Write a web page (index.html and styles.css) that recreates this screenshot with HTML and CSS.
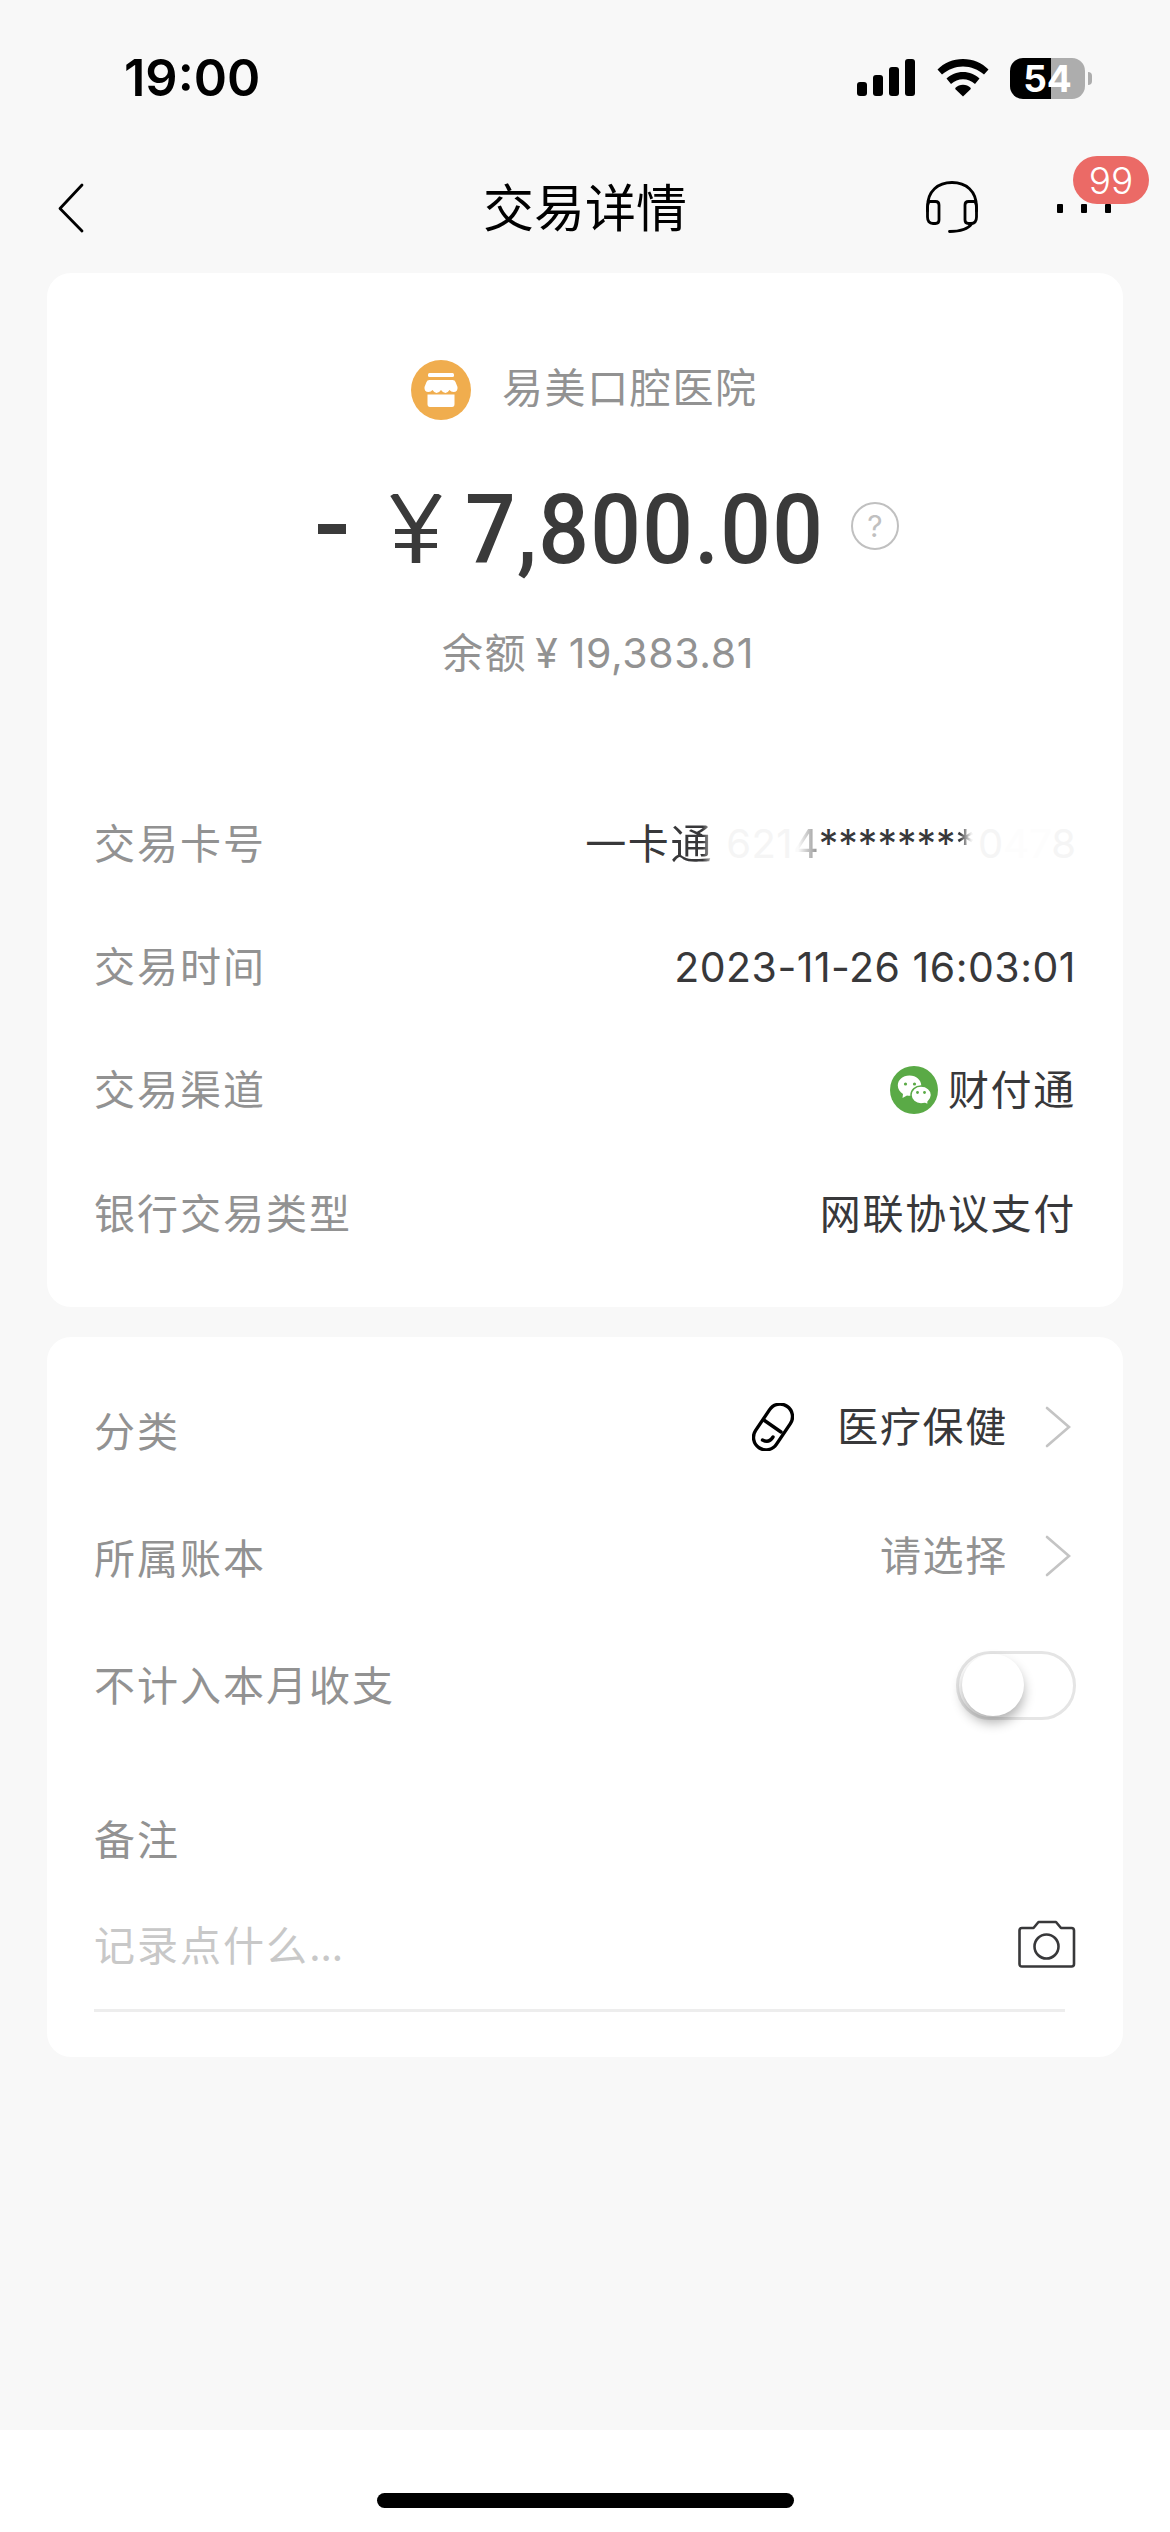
FILE: index.html
```html
<!DOCTYPE html>
<html lang="zh-CN">
<head>
<meta charset="utf-8">
<title>交易详情</title>
<link rel="stylesheet" href="styles.css">
</head>
<body>
<div class="screen">
  <header class="status">
    <span class="clock">19:00</span>
    <div class="status-icons">
      <svg class="signal" width="58" height="38" viewBox="0 0 58 38"><rect x="0" y="23" width="10" height="14" rx="3"/><rect x="16" y="16" width="10" height="21" rx="3"/><rect x="32" y="8" width="10" height="29" rx="3"/><rect x="48" y="0" width="10" height="37" rx="3"/></svg>
      <svg class="wifi" width="52" height="38" viewBox="0 0 52 38"><path d="M26 0C36 0 45 4 51.500 10.500L47 15.500C41 10.500 34 7.500 26 7.500S11 10.500 5 15.500L.5 10.500C7 4 16 0 26 0Z"/><path d="M26 13C32.500 13 38 15.500 42.500 19.500L38 25C34.500 22 30.500 20.300 26 20.300S17.500 22 14 25L9.500 19.500C14 15.500 19.500 13 26 13Z"/><path d="M26 25.700C29 25.700 31.500 26.800 33.500 28.800Q34.200 29.600 33.300 30.500L26 37.500L18.700 30.500Q17.800 29.600 18.500 28.800C20.500 26.800 23 25.700 26 25.700Z"/></svg>
      <div class="battery"><span class="battery-body">54</span><span class="battery-nub"></span></div>
    </div>
  </header>
  <nav class="nav">
    <svg class="back" width="26" height="50" viewBox="0 0 26 50"><path d="M24 2L2 25.500L24 48" fill="none" stroke="#000" stroke-width="2.800" stroke-linecap="round" stroke-linejoin="round"/></svg>
    <h1 class="title">交易详情</h1>
    <div class="nav-actions">
      <svg width="54" height="54" viewBox="0 0 54 54" fill="none" stroke="#000" stroke-width="2.800" stroke-linecap="round"><path d="M2.500 31V27C2.500 11 13 2.500 27 2.500S51.500 11 51.500 27V31"/><path d="M4 21.500H10.500Q14 21.500 14 25V40Q14 43.500 10.500 43.500H8Q2.500 43.500 2.500 37V28Q2.500 24 4 21.500Z"/><path d="M50 21.500H43.500Q40 21.500 40 25V40Q40 43.500 43.500 43.500H46Q51.500 43.500 51.500 37V28Q51.500 24 50 21.500Z"/><path d="M46.500 44C43 49 36 51.500 24.500 51.500"/></svg>
      <div class="more"><i></i><i></i><i></i><span class="badge">99</span></div>
    </div>
  </nav>
  <main class="content">
    <section class="card summary">
      <div class="merchant">
        <svg width="60" height="60" viewBox="0 0 60 60"><circle cx="30" cy="30" r="30" fill="#f0ad4e"/><g fill="#fff"><rect x="17" y="13" width="26" height="4" rx="1.500"/><path d="M18.500 20H41.500Q44 20 44.500 22L46.500 27Q47 32 42.500 32Q40 32 38.500 30Q36.500 33 34.500 33Q32 33 30 30Q28 33 25.500 33Q23.500 33 21.500 30Q20 32 17.500 32Q13 32 13.500 27L15.500 22Q16 20 18.500 20Z"/><path d="M16.500 34.500H43.500V44Q43.500 47 41 47H19Q16.500 47 16.500 44Z"/></g></svg>
        <span class="merchant-name">易美口腔医院</span>
      </div>
      <div class="amount"><span class="minus"></span><svg class="yen" width="52" height="69" viewBox="0 0 52 69" fill="none" stroke="#3a3a3a"><path d="M3.500 0L26 36L48.500 0" stroke-width="7.500"/><path d="M26 33V69" stroke-width="8.500"/><path d="M5 37.500H47M5 51.500H47" stroke-width="5"/></svg><span class="figure">7,800.00</span><span class="help">?</span></div>
      <div class="balance"><span class="balance-label">余额</span><span class="balance-sign">¥</span><span class="balance-value">19,383.81</span></div>
      <dl class="details">
        <div class="row"><dt>交易卡号</dt><dd class="card-no">一卡<span class="fade-char">通</span><span class="number"><span class="masked">621</span><span class="fade-digit">4</span><span class="stars">*******<span class="fade-star">*</span></span><span class="tail">0<span class="faint">47</span>8</span></span></dd></div>
        <div class="row"><dt>交易时间</dt><dd class="time">2023-11-26 16:03:01</dd></div>
        <div class="row"><dt>交易渠道</dt><dd class="channel"><svg width="48" height="48" viewBox="0 0 48 48"><circle cx="24" cy="24" r="24" fill="#5aaa46"/><path d="M19.500 9.500C12.500 9.500 7.800 14 7.800 19.500C7.800 23 9.800 26 13 28L12.500 32L17 29.500Q18 29.800 20 29.800L26 29C30 27 31.500 24 31.300 19.500C31 14 26.500 9.500 19.500 9.500Z" fill="#fff"/><path d="M31 20C25.500 20 21 24 21 29S25.500 38 31 38Q33 38 35 37.500L38.500 39L38 36C40 34 41.500 32 41.500 29C41.500 24 37 20 31 20Z" fill="#fff" stroke="#5aaa46" stroke-width="1.500"/><g fill="#5aaa46"><circle cx="15.500" cy="18" r="1.600"/><circle cx="24.500" cy="18" r="1.600"/><circle cx="27.500" cy="26.500" r="1.400"/><circle cx="34.500" cy="26.500" r="1.400"/></g></svg><span>财付通</span></dd></div>
        <div class="row"><dt>银行交易类型</dt><dd>网联协议支付</dd></div>
      </dl>
    </section>
    <section class="card settings">
      <div class="option option-category"><span class="label">分类</span><div class="choice"><svg class="pill" width="42" height="48" viewBox="0 0 42 48" fill="none" stroke="#000" stroke-width="3.400" stroke-linecap="round"><rect x="8.500" y="-1" width="25" height="50" rx="12.500" transform="rotate(34 21 24)"/><path d="M12.500 17.500L29 29M10.500 37Q17 40.500 21 34"/></svg><span class="value">医疗保健</span><svg class="chevron" width="26" height="42" viewBox="0 0 26 42"><path d="M2 2L24 21L2 40"/></svg></div></div>
      <div class="option option-book"><span class="label">所属账本</span><div class="choice"><span class="value placeholder">请选择</span><svg class="chevron" width="26" height="42" viewBox="0 0 26 42"><path d="M2 2L24 21L2 40"/></svg></div></div>
      <div class="option option-switch"><span class="label">不计入本月收支</span><span class="switch"><span class="knob"></span></span></div>
      <div class="note-label">备注</div>
      <div class="note"><span class="note-hint">记录点什么<span class="dots">...</span></span><svg class="camera" width="58" height="50" viewBox="0 0 58 50" fill="none" stroke="#38383a" stroke-width="2.600" stroke-linejoin="round"><path d="M4 9H15.500L20.500 3H38L43 9H53.500Q56 9 56 11.500V45Q56 47.500 53.500 47.500H4Q1.500 47.500 1.500 45V11.500Q1.500 9 4 9Z"/><circle cx="28.500" cy="27.500" r="12"/></svg></div>
      <div class="rule"></div>
    </section>
  </main>
  <footer class="home"><span class="home-bar"></span></footer>
</div>
</body>
</html>
```
FILE: styles.css
```css
* { box-sizing: border-box; }
body { margin: 0; background: #f8f8f8; }
.screen {
  width: 1170px; height: 2532px; display: flex; flex-direction: column;
  font-family: Inter, "Noto Sans CJK SC", sans-serif;
  font-size: 41px; line-height: 60px; color: #38383a; overflow: hidden;
}
svg { display: block; flex: none; }

.status { height: 146px; display: flex; justify-content: space-between; align-items: flex-start; padding: 48px 78px 0 124px; color: #000; }
.clock { font-size: 50.500px; font-weight: 600; line-height: 60px; }
.status-icons { display: flex; align-items: center; height: 60px; }
.wifi { margin-left: 22px; }
.battery { display: flex; align-items: center; gap: 3px; margin-left: 21px; }
.battery-body {
  width: 75px; height: 41px; border-radius: 13px; text-align: center;
  background: linear-gradient(90deg, #000 41px, #adadad 41px);
  color: #fff; font-size: 37px; line-height: 41px; font-weight: 700;
}
.battery-nub { width: 4px; height: 13px; border-radius: 0 5px 5px 0; background: #adadad; }

.nav { height: 127px; display: grid; grid-template-columns: 1fr auto 1fr; align-items: start; padding: 37px 21px 0 58px; }
.title { margin: -4px 0 0 -37px; font-size: 51px; line-height: 60px; font-weight: 400; color: #000; }
.nav-actions { display: flex; justify-content: flex-end; gap: 78px; margin-top: -3px; }
.more { position: relative; display: flex; gap: 18px; width: 92px; padding-top: 24px; }
.more i { width: 6px; height: 9px; border-radius: 1px; background: #000; }
.badge {
  position: absolute; right: 0; top: -24px; width: 76px; height: 48px; border-radius: 24px;
  background: #eb6a66; color: #fff; font-size: 37px; line-height: 49px; font-weight: 350; text-align: center;
}

.content { flex: 1; display: flex; flex-direction: column; gap: 30px; padding: 0 47px; }
.card { background: #fff; border-radius: 24px; padding: 0 47px; }
.summary { height: 1034px; padding-top: 87px; }
.merchant { display: flex; align-items: center; height: 60px; margin-left: 317px; gap: 31px; color: #929292; }
.merchant-name { margin-top: -5px; letter-spacing: 1.600px; }
.amount { display: flex; align-items: flex-start; margin: 74px 0 0 224px; height: 69px; }
.minus { width: 28px; height: 10px; margin-top: 30px; background: #3a3a3a; }
.yen { margin-left: 44px; }
.figure {
  width: 386px; margin: 2px 0 0 23px; font: 500 97px/69px Roboto, sans-serif; color: #3a3a3a;
  letter-spacing: 1.400px; white-space: nowrap; transform: scaleX(.92); transform-origin: 0 50%;
}
.help { width: 48px; height: 48px; margin: 8px 0 0 0; border: 2px solid #c0c0c0; border-radius: 50%; color: #c0c0c0; font-size: 30px; line-height: 44px; text-align: center; }
.balance { display: flex; height: 60px; margin: 60px 0 0 348px; color: #929292; }
.balance-label { letter-spacing: 1.600px; }
.balance-sign { margin-left: 8px; }
.balance-value { margin-left: 11px; letter-spacing: .6px; }
.details { margin: 99px 0 0; }
.row { display: flex; justify-content: space-between; align-items: center; height: 123.400px; }
dt, .label, .note-label { color: #929292; letter-spacing: 2px; }
dd { margin: 0; letter-spacing: 1.700px; }
.time { letter-spacing: .5px; }
.channel { display: flex; align-items: center; gap: 10px; }
.card-no { display: flex; }
.fade-char { color: transparent; background: linear-gradient(90deg, #38383a 75%, #c8c8c8 100%); background-clip: text; }
.number { display: flex; margin-left: 13px; letter-spacing: 0; font-size: 40px; }
.masked { color: #f5f5f5; letter-spacing: .4px; }
.fade-digit { color: transparent; background: linear-gradient(90deg, #fafafa 20%, #999 90%); background-clip: text; }
.stars { margin-right: 3px; font-size: 39px; }
.fade-star { color: transparent; background: linear-gradient(90deg, #38383a 20%, #f0f0f0 80%); background-clip: text; }
.tail { color: #f5f5f5; }
.faint { color: #fdfdfd; }

.settings { height: 720px; padding-top: 25px; }
.option { display: flex; justify-content: space-between; align-items: center; }
.option-category { height: 130px; }
.option-category .label { margin-top: 10px; }
.option-book { height: 128px; }
.option-book .label { margin-top: 5px; }
.option-switch { height: 131px; }
.choice { display: flex; align-items: center; padding-right: 5px; }
.pill { margin-right: 43px; }
.value { letter-spacing: 1.700px; }
.placeholder { color: #929292; }
.chevron { margin-left: 37px; fill: none; stroke: #c4c4c4; stroke-width: 2.600; stroke-linecap: round; }
.switch { width: 120px; height: 69px; border: 3px solid #e5e5e5; border-radius: 35px; }
.knob { display: block; width: 62px; height: 62px; margin-left: 3px; border-radius: 50%; background: #fff; box-shadow: 0 7px 12px rgba(0,0,0,.3); }
.note-label { margin-top: 59px; }
.note { display: flex; justify-content: space-between; align-items: center; height: 60px; margin-top: 46px; }
.note-hint { color: #c8c8c8; letter-spacing: 2px; }
.dots { letter-spacing: -.6px; }
.camera { margin-top: -5px; }
.rule { width: 971px; height: 3px; margin-top: 33px; background: #ededed; }
.home { height: 102px; display: flex; justify-content: center; background: #fff; padding-top: 63px; }
.home-bar { width: 417px; height: 15px; border-radius: 8px; background: #000; }
```
